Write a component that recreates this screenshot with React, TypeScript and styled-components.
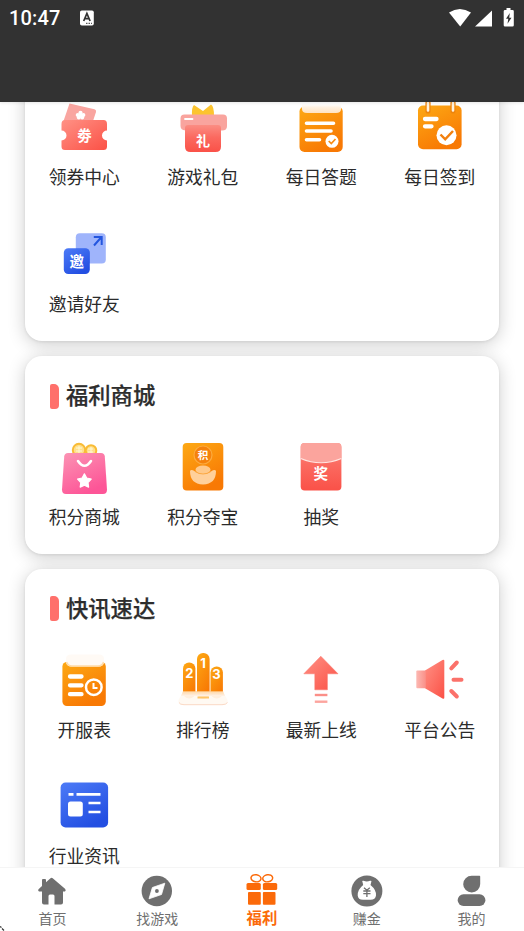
import React from "react";
import styled, { createGlobalStyle } from "styled-components";

const GlobalStyle = createGlobalStyle`
  * { box-sizing: border-box; }
  html, body { margin: 0; padding: 0; }
  body {
    font-family: Roboto, "Noto Sans CJK SC", sans-serif;
    background: #fff;
    overflow: hidden;
  }
  svg { display: block; }
`;

const Screen = styled.div`
  width: 524px;
  height: 931px;
  display: flex;
  flex-direction: column;
  position: relative;
  overflow: hidden;
  background: #fff;
`;

const TopBar = styled.header`
  flex: none;
  height: 102px;
  background: #323232;
  padding: 0 9px;
  position: relative;
  z-index: 1;
  box-shadow: 0 1px 3px rgba(0, 0, 0, 0.1);
`;

const StatusBar = styled.div`
  height: 36px;
  display: flex;
  align-items: center;
  color: #fff;
`;

const Clock = styled.span`
  width: 70px;
  font-size: 20px;
  font-weight: 500;
  letter-spacing: 0.15px;
  line-height: 36px;
`;

const StatusIcons = styled.div`
  margin-left: auto;
  display: flex;
`;

const Content = styled.main`
  flex: 1;
  min-height: 0;
  overflow: hidden;
  padding: 0 25px;
  display: flex;
  flex-direction: column;
  gap: 14.5px;
`;

const Card = styled.section<{ $scrolled?: boolean }>`
  flex: none;
  background: #fff;
  border-radius: 17px;
  box-shadow: 0 3px 18px rgba(0, 0, 0, 0.2), 0 1px 3px rgba(0, 0, 0, 0.08);
  margin: ${(p) => (p.$scrolled ? "-25px 0 0.5px" : "0")};
  padding: ${(p) => (p.$scrolled ? "20px 0 23px" : "0 0 23px")};
`;

const CardHeader = styled.div`
  height: 82px;
  padding: 0 0 2px 25px;
  display: flex;
  align-items: center;
  gap: 7px;
`;

const Marker = styled.span`
  width: 9px;
  height: 25px;
  background: #ff706b;
  border-radius: 2px 5px 4px 2px;
`;

const CardTitle = styled.h2`
  margin: 0;
  font-size: 22.3px;
  font-weight: 500;
  line-height: 30px;
  color: #2d2d2d;
  -webkit-text-stroke: 0.25px #2d2d2d;
`;

const Grid = styled.div`
  display: grid;
  grid-template-columns: repeat(4, 1fr);
  row-gap: 33px;
`;

const Entry = styled.div<{ $gap: number }>`
  display: flex;
  flex-direction: column;
  align-items: center;
  gap: ${(p) => p.$gap}px;
`;

const EntryLabel = styled.span`
  font-size: 17.8px;
  line-height: 26px;
  color: #2b2b2b;
  font-weight: 400;
`;

const Tabs = styled.nav`
  flex: none;
  height: 64px;
  display: grid;
  grid-template-columns: repeat(5, 1fr);
  background: #fff;
  border-top: 1px solid #f5f5f5;
  position: relative;
  z-index: 1;
`;

const Tab = styled.div<{ $active?: boolean }>`
  display: flex;
  flex-direction: column;
  align-items: center;
  padding-top: 5px;
  color: ${(p) => (p.$active ? "#fb6a0a" : "#6f6f6f")};
  font-weight: ${(p) => (p.$active ? 700 : 400)};
`;

const TabLabel = styled.span<{ $active?: boolean }>`
  font-size: ${(p) => (p.$active ? "15.4px" : "14px")};
  line-height: 20px;
`;

const CornerMark = styled.svg`
  position: absolute;
  left: 0;
  bottom: 0;
  z-index: 2;
`;

const Defs = styled.svg`
  position: absolute;
`;

const Glyph = styled.text`
  font-family: "Noto Sans CJK SC", sans-serif;
  font-weight: 700;
  text-anchor: middle;
  fill: #fff;
`;

const Digit = styled.text`
  font-family: Inter, Roboto, sans-serif;
  font-weight: 700;
  font-size: 13px;
  text-anchor: middle;
  fill: #fff;
`;

const Gradients = () => (
  <Defs width="0" height="0" aria-hidden>
    <defs>
      <linearGradient id="red" x1="0" y1="0" x2="1" y2="1">
        <stop offset="0" stopColor="#ff9185" />
        <stop offset="1" stopColor="#fb5146" />
      </linearGradient>
      <linearGradient id="redDown" x1="0" y1="0" x2="0" y2="1">
        <stop offset="0" stopColor="#fb8d83" />
        <stop offset="0.45" stopColor="#fb6a60" />
        <stop offset="1" stopColor="#fa5148" />
      </linearGradient>
      <linearGradient id="orange" x1="0" y1="0" x2="0.5" y2="1">
        <stop offset="0" stopColor="#fda914" />
        <stop offset="1" stopColor="#f87904" />
      </linearGradient>
      <linearGradient id="pink" x1="0" y1="0" x2="0.5" y2="1">
        <stop offset="0" stopColor="#fb94b4" />
        <stop offset="1" stopColor="#fd5597" />
      </linearGradient>
      <linearGradient id="blue" x1="0" y1="0" x2="0.6" y2="1">
        <stop offset="0" stopColor="#4d7bf7" />
        <stop offset="1" stopColor="#234fe2" />
      </linearGradient>
      <linearGradient id="lid" x1="0" y1="0" x2="0" y2="1">
        <stop offset="0" stopColor="#fff" stopOpacity="0.95" />
        <stop offset="1" stopColor="#ffe3c2" />
      </linearGradient>
      <linearGradient id="base" x1="0" y1="0" x2="0" y2="1">
        <stop offset="0" stopColor="#ffcf93" stopOpacity="0.7" />
        <stop offset="1" stopColor="#fff3ea" />
      </linearGradient>
      <linearGradient id="fade" x1="0" y1="0" x2="1" y2="0">
        <stop offset="0" stopColor="#fcb9b3" />
        <stop offset="1" stopColor="#fa9088" />
      </linearGradient>
    </defs>
  </Defs>
);

const Frame = ({ children }: { children: React.ReactNode }) => (
  <svg width="60" height="60" viewBox="0 0 60 60">{children}</svg>
);

const CouponIcon = () => (
  <Frame>
    <path d="M15.500 6.500L40.500 12.200Q42.500 13 42 15L38 27H8.500Z" fill="#f9a5a0" />
    <g fill="#fff">
      <circle cx="26.500" cy="15.800" r="2.100" /><circle cx="29.300" cy="18" r="2.100" />
      <circle cx="28.200" cy="20.600" r="2" /><circle cx="24.800" cy="20.600" r="2" />
      <circle cx="23.800" cy="18" r="2.100" /><circle cx="26.500" cy="18.600" r="2" />
    </g>
    <path d="M11 23H49.500Q53 23 53 27V33.500A5 5 0 0 0 53 43.500V49.500Q53 53 49.500 53H11Q7.500 53 7.500 49.500V43.500A5 5 0 0 0 7.500 33.500V27Q7.500 23 11 23Z" fill="url(#red)" />
    <Glyph x="30.500" y="44" fontSize="14.500">劵</Glyph>
  </Frame>
);

const GiftPackIcon = () => (
  <Frame>
    <path d="M21 8L30 14L38 7.500Q41 9 41 19H19Q18.500 10 21 8Z" fill="#fcc42f" />
    <path d="M11.500 17.500H50Q54 17.500 54 21.500V29Q54 33.500 49 33.500H12.500Q7.500 33 7.500 29V21.500Q7.500 17.500 11.500 17.500Z" fill="#f9a49e" />
    <path d="M12 31Q12 28 15 28H45Q48 28 48 31V49.500Q48 55 42.500 55H17.500Q12 55 12 49.500Z" fill="url(#redDown)" />
    <path d="M12 22H19.500" stroke="#fff" strokeWidth="1.800" strokeLinecap="round" />
    <Glyph x="30" y="49" fontSize="14">礼</Glyph>
  </Frame>
);

const QuizIcon = () => (
  <Frame>
    <rect x="8.500" y="9.500" width="43.200" height="45.500" rx="5" fill="url(#orange)" />
    <path d="M11 7H50V12Q50 16 45 16H16Q11 16 11 12Z" fill="url(#lid)" />
    <path d="M15.500 26.300H42.500M15.500 34H40M15.500 42.700H28.500" stroke="#fff" strokeWidth="3.600" strokeLinecap="round" />
    <circle cx="41" cy="44.300" r="6.500" fill="#fff" />
    <path d="M37.700 44L40.300 46.600L44.500 42" fill="none" stroke="#f88b12" strokeWidth="1.700" />
  </Frame>
);

const CheckInIcon = () => (
  <Frame>
    <rect x="8" y="8.500" width="43.600" height="43.700" rx="5" fill="url(#orange)" />
    <path d="M18 6V14M43 6V14" stroke="#ee850d" strokeWidth="5.200" strokeLinecap="round" />
    <path d="M18 6V13.500M43 6V13.500" stroke="#fff3df" strokeWidth="2.600" strokeLinecap="round" />
    <path d="M15 22H26.500M15 29.300H21.500" stroke="#fff" strokeWidth="4.300" strokeLinecap="round" />
    <circle cx="36.500" cy="38.300" r="10" fill="#fff" />
    <path d="M30.500 37.500L35.200 42.300L43 34" fill="none" stroke="#f2800f" strokeWidth="2.500" />
  </Frame>
);

const InviteIcon = () => (
  <Frame>
    <rect x="21.800" y="9.200" width="30" height="30.200" rx="4" fill="#9fb4fb" />
    <path d="M22 24.500H32Q36 25 36 29V39H22Z" fill="#7795f6" />
    <path d="M40 21.500L47.500 13M39.800 13H47.700V21" fill="none" stroke="#2456df" strokeWidth="2" />
    <rect x="9.800" y="24.200" width="26" height="25.800" rx="4.500" fill="url(#blue)" />
    <Glyph x="22.800" y="43" fontSize="14.500">邀</Glyph>
  </Frame>
);

const BagIcon = () => (
  <Frame>
    <circle cx="25" cy="12" r="6.200" fill="#ffe08c" stroke="#f9bc35" strokeWidth="2" />
    <circle cx="37" cy="12.500" r="5.300" fill="#ffe08c" stroke="#f9bc35" strokeWidth="2" />
    <path d="M22 10H28M22 13H28M25 8V15M34 11H39M34 14H39M37 9V15" stroke="#fff8d5" strokeWidth="1" />
    <path d="M14 15H47Q50.500 15 50.800 18.500L53 51.500Q53 56 49 56H12Q8 56 8 51.500L10.200 18.500Q10.500 15 14 15Z" fill="url(#pink)" />
    <path d="M24 23Q30.500 32.500 37 23" fill="none" stroke="#fff" strokeWidth="2.600" strokeLinecap="round" />
    <path d="M30.400 35.800L32.700 40L37.200 41L34 44.500L34.600 49.100L30.400 47.200L26.200 49.100L26.800 44.500L23.600 41L28.100 40Z" fill="#fff" stroke="#fff" strokeWidth="1.200" strokeLinejoin="round" />
  </Frame>
);

const TreasureIcon = () => (
  <Frame>
    <rect x="9.700" y="5" width="40.600" height="47.600" rx="4" fill="url(#orange)" />
    <circle cx="30" cy="17" r="9" fill="#f5820c" stroke="#fcab3f" strokeWidth="1.200" />
    <Glyph x="30" y="20.800" fontSize="10.500">积</Glyph>
    <path d="M17 33Q18 31 22 33.500Q30 38.500 38 33.500Q42 31 43 33Q43 46 30 46.500Q17 46 17 33Z" fill="#ffd09b" />
    <ellipse cx="30" cy="31.800" rx="7.500" ry="4.200" fill="#ffc98a" />
    <path d="M22 33.500Q30 38.500 38 33.500" fill="none" stroke="#fba63e" strokeWidth="0.900" />
  </Frame>
);

const LotteryIcon = () => (
  <Frame>
    <rect x="9.700" y="5" width="40.700" height="47.600" rx="4" fill="url(#redDown)" />
    <path d="M13.500 5H46.500Q50.400 5 50.400 9V20.500Q30 29 9.700 20.500V9Q9.700 5 13.500 5Z" fill="#fba49d" />
    <path d="M9.700 20.500Q30 29 50.400 20.500" fill="none" stroke="#ffe5e1" strokeWidth="1.200" />
    <Glyph x="29.800" y="40.500" fontSize="14.500">奖</Glyph>
  </Frame>
);

const ServerListIcon = () => (
  <Frame>
    <rect x="8.400" y="11" width="43.400" height="44" rx="4.500" fill="url(#orange)" />
    <path d="M12 8Q12 3.500 17 3.500H45Q50 3.500 50 8V11.500Q49 15.500 45 15.500H17Q13 15.500 12 11.500Z" fill="#fffaf5" />
    <path d="M12.500 11Q14 15 18 15H44Q48.500 15 49.500 11" fill="none" stroke="#ffdca9" strokeWidth="1.500" />
    <path d="M16 25.500H27.500M16 34.300H27.500M16 43.200H27.500" stroke="#fff" strokeWidth="4.300" strokeLinecap="round" />
    <circle cx="39.800" cy="36.200" r="7.800" fill="none" stroke="#fff" strokeWidth="2.500" />
    <path d="M39.500 32V37H43.500" fill="none" stroke="#fff" strokeWidth="2" />
  </Frame>
);

const RankingIcon = () => (
  <Frame>
    <rect x="10" y="11.500" width="12.400" height="36" rx="6" fill="url(#orange)" />
    <rect x="24" y="2" width="12.600" height="46" rx="6" fill="url(#orange)" />
    <rect x="37.500" y="15.500" width="12.400" height="32" rx="6" fill="url(#orange)" />
    <path d="M10 41H50L54.500 49Q55.500 54 50 54H10Q4.500 54 5.500 49Z" fill="#fff8f1" fillOpacity="0.92" />
    <path d="M10 40H50L52 45H8Z" fill="url(#base)" />
    <path d="M6 51.500Q7 53.700 11 53.700H49Q53 53.700 54.500 51.500" fill="none" stroke="#fbd9c5" strokeWidth="1" />
    <path d="M24.500 46.500H36" stroke="#ffc568" strokeWidth="2" />
    <Digit x="16.300" y="27">2</Digit>
    <Digit x="30" y="17">1</Digit>
    <Digit x="43.500" y="28">3</Digit>
  </Frame>
);

const LatestIcon = () => (
  <Frame>
    <path d="M29.800 5.200L47 22.800H36.400V38.800H23.800V22.800H12.800Z" fill="url(#red)" stroke="#fb746b" strokeWidth="0.500" strokeLinejoin="round" />
    <path d="M23.800 44H36.400" stroke="#fb8f88" strokeWidth="2.400" />
    <path d="M23.800 50.700H36.400" stroke="#fca49e" strokeWidth="2.400" />
  </Frame>
);

const NoticeIcon = () => (
  <Frame>
    <path d="M15 19.500L32.500 9Q34.300 8 34.300 10V46.500Q34.300 48.500 32.500 47.500L15 37.200Z" fill="url(#red)" />
    <rect x="6.300" y="19.500" width="9.500" height="17.700" rx="1" fill="url(#fade)" />
    <path d="M41.300 17.300L46.800 11.500M43.500 28.700H51.500M41.300 40L46.800 45.500" stroke="#fb716a" strokeWidth="4" strokeLinecap="round" />
  </Frame>
);

const NewsIcon = () => (
  <Frame>
    <rect x="6.600" y="5.500" width="47.500" height="44.900" rx="5" fill="url(#blue)" />
    <path d="M14.500 17.300H19.500M22.500 17.300H46.500M34.500 26H46.500M34.500 35H46.500" stroke="#fff" strokeWidth="2.700" />
    <rect x="14" y="24.600" width="14.800" height="14.900" rx="2.500" fill="#fff" />
  </Frame>
);

const TabFrame = ({ children }: { children: React.ReactNode }) => (
  <svg width="36" height="36" viewBox="0 0 36 36" fill="currentColor">{children}</svg>
);

const HomeIcon = () => (
  <TabFrame>
    <path d="M8 13V7Q8 6 9 6H11Q12 6 12 7V9.200L16.500 5.200Q17.600 4.300 18.700 5.200L31 15.800Q32.500 17.500 31 18.500H29V29.500Q29 31.500 27 31.500H20.500V23Q20.500 21.500 19 21.500H16Q14.500 21.500 14.500 23V31.500H10Q8 31.500 8 29.500V18.500H5Q3.500 17.500 4.500 16.200Z" />
  </TabFrame>
);

const CompassIcon = () => (
  <TabFrame>
    <circle cx="17.800" cy="18" r="15.200" />
    <path d="M25.800 10.200L22.500 21.500L10 25.800L13.400 14.500Z" fill="#fff" stroke="#fff" strokeWidth="0.800" strokeLinejoin="round" />
    <circle cx="17.900" cy="18" r="1.900" />
  </TabFrame>
);

const WelfareIcon = () => (
  <TabFrame>
    <g fill="none" stroke="currentColor" strokeWidth="1.500">
      <ellipse cx="12" cy="5.300" rx="5" ry="3.500" transform="rotate(10 12 5.300)" />
      <ellipse cx="23.700" cy="5.300" rx="5" ry="3.500" transform="rotate(-10 23.700 5.300)" />
    </g>
    <rect x="2.500" y="10" width="14.300" height="7" rx="1.500" />
    <rect x="18.900" y="10" width="14.300" height="7" rx="1.500" />
    <rect x="4" y="19" width="12.800" height="12.700" rx="1" />
    <rect x="18.900" y="19" width="12.600" height="12.700" rx="1" />
  </TabFrame>
);

const MoneyIcon = () => (
  <TabFrame>
    <circle cx="17.900" cy="18" r="15.500" />
    <path d="M13.500 9Q12.500 7.500 14.500 7.800Q17.800 9 21 7.800Q23.200 7.500 22.200 9.200L21.500 12Q27.500 17 27 22.500Q26.500 26.700 21.500 26.700H14Q9 26.700 8.700 22.500Q8.500 16.500 14.200 12Z" fill="#fff" />
    <path d="M15 14.800L17.900 17.200L20.800 14.800M14.300 18H21.500M14.300 20.700H21.500M17.900 17V24" stroke="currentColor" strokeWidth="1.300" fill="none" />
  </TabFrame>
);

const ProfileIcon = () => (
  <TabFrame>
    <path d="M17.700 2.800H25.500Q26.200 2.800 26.200 3.500V11A8.500 8.300 0 1 1 17.700 2.800Z" />
    <rect x="3.700" y="21.300" width="27.700" height="11.700" rx="5.800" />
  </TabFrame>
);

type Item = { label: string; icon: React.ComponentType };

const benefits: Item[] = [
  { label: "领券中心", icon: CouponIcon },
  { label: "游戏礼包", icon: GiftPackIcon },
  { label: "每日答题", icon: QuizIcon },
  { label: "每日签到", icon: CheckInIcon },
  { label: "邀请好友", icon: InviteIcon },
];

const mall: Item[] = [
  { label: "积分商城", icon: BagIcon },
  { label: "积分夺宝", icon: TreasureIcon },
  { label: "抽奖", icon: LotteryIcon },
];

const news: Item[] = [
  { label: "开服表", icon: ServerListIcon },
  { label: "排行榜", icon: RankingIcon },
  { label: "最新上线", icon: LatestIcon },
  { label: "平台公告", icon: NoticeIcon },
  { label: "行业资讯", icon: NewsIcon },
];

const tabs: (Item & { active?: boolean })[] = [
  { label: "首页", icon: HomeIcon },
  { label: "找游戏", icon: CompassIcon },
  { label: "福利", icon: WelfareIcon, active: true },
  { label: "赚金", icon: MoneyIcon },
  { label: "我的", icon: ProfileIcon },
];

const EntryGrid = ({ items, gap = 7 }: { items: Item[]; gap?: number }) => (
  <Grid>
    {items.map(({ label, icon: Icon }) => (
      <Entry key={label} $gap={gap}>
        <Icon />
        <EntryLabel>{label}</EntryLabel>
      </Entry>
    ))}
  </Grid>
);

const Section = ({ title, items }: { title: string; items: Item[] }) => (
  <Card>
    <CardHeader>
      <Marker />
      <CardTitle>{title}</CardTitle>
    </CardHeader>
    <EntryGrid items={items} />
  </Card>
);

export default function App() {
  return (
    <>
      <GlobalStyle />
      <Screen>
        <TopBar>
          <StatusBar>
            <Clock>10:47</Clock>
            <svg width="16" height="18" viewBox="0 0 16 18">
              <rect x="1" y="1.500" width="13.800" height="15" rx="1.800" fill="#fff" />
              <path d="M4.700 12L7.900 4.500L11.100 12M5.800 9.700H10" fill="none" stroke="#323232" strokeWidth="1.700" />
              <path d="M7 14.300H13" stroke="#323232" strokeWidth="1" strokeDasharray="1.500 1" />
            </svg>
            <StatusIcons>
              <svg width="68" height="22" viewBox="0 0 68 22" fill="#fff">
                <path d="M2 5.500Q12.800 -1.500 24 5.500L13.200 19.500Z" />
                <path d="M45 3.500V19.500H28Z" />
                <path d="M59.500 1H63.500V3H65.500Q66.800 3 66.800 4.300V18.200Q66.800 19.500 65.500 19.500H58Q56.700 19.500 56.700 18.200V4.300Q56.700 3 58 3H59.500Z" />
                <path d="M62.800 6L59 11.800H61.300L60.500 16.800L64.500 10.700H62.200Z" fill="#323232" />
              </svg>
            </StatusIcons>
          </StatusBar>
        </TopBar>
        <Content>
          <Card $scrolled>
            <EntryGrid items={benefits} gap={8} />
          </Card>
          <Section title="福利商城" items={mall} />
          <Section title="快讯速达" items={news} />
        </Content>
        <Tabs>
          {tabs.map(({ label, icon: Icon, active }) => (
            <Tab key={label} $active={active}>
              <Icon />
              <TabLabel $active={active}>{label}</TabLabel>
            </Tab>
          ))}
        </Tabs>
        <CornerMark width="5" height="6" viewBox="0 0 5 6">
          <path d="M0 1.500L1.500 2.500M2 3.500L4 5.500" stroke="#333" strokeWidth="1.200" />
        </CornerMark>
        <Gradients />
      </Screen>
    </>
  );
}
